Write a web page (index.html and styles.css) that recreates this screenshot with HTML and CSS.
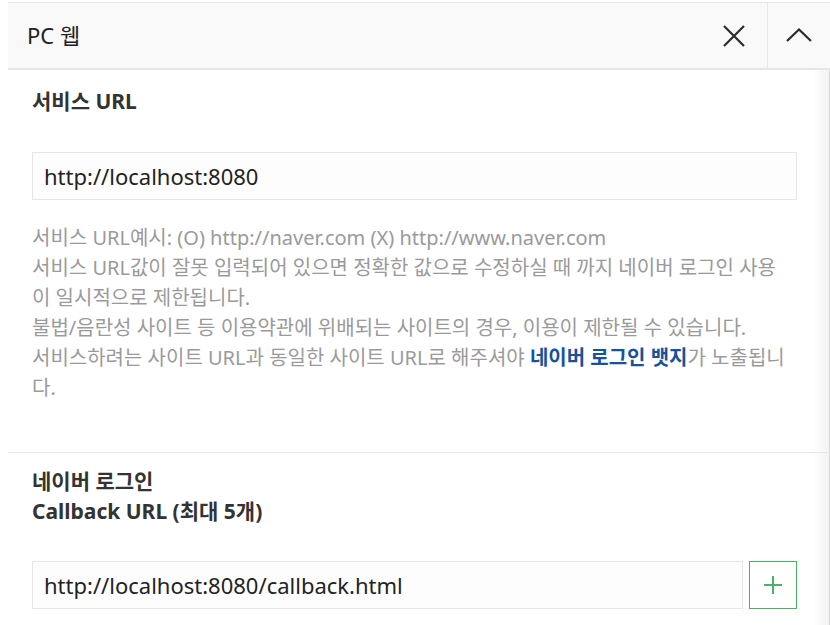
FILE: index.html
```html
<!DOCTYPE html>
<html lang="ko">
<head>
    <meta charset="UTF-8">
    <meta name="viewport" content="width=device-width, initial-scale=1.0">
    <title>PC 웹 설정</title>
    <link rel="stylesheet" href="styles.css">
</head>
<body>
    <div class="layer">
        <!-- Header -->
        <div class="layer-head">
            <h3 class="layer-title">PC 웹</h3>
            <button type="button" class="head-btn btn-close" aria-label="삭제">
                <svg width="22" height="22" viewBox="0 0 22 22">
                    <path d="M1 1 L21 21 M21 1 L1 21" stroke="#2b2b2b" stroke-width="2.2" fill="none"/>
                </svg>
            </button>
            <button type="button" class="head-btn btn-fold" aria-label="접기">
                <svg width="26" height="14" viewBox="0 0 26 14">
                    <path d="M1 13 L13 1.5 L25 13" stroke="#2b2b2b" stroke-width="2.2" fill="none"/>
                </svg>
            </button>
        </div>

        <div class="layer-body">
            <!-- Service URL -->
            <div class="field">
                <h4 class="field-label">서비스 URL</h4>
                <input type="text" class="text-input" value="http://localhost:8080">
                <p class="help">
                    서비스 URL예시: (O) http://naver.com (X) http://www.naver.com<br>
                    서비스 URL값이 잘못 입력되어 있으면 정확한 값으로 수정하실 때 까지 네이버 로그인 사용이 일시적으로 제한됩니다.<br>
                    불법/음란성 사이트 등 이용약관에 위배되는 사이트의 경우, 이용이 제한될 수 있습니다.<br>
                    서비스하려는 사이트 URL과 동일한 사이트 URL로 해주셔야 <strong class="point">네이버 로그인 뱃지</strong>가 노출됩니다.
                </p>
            </div>

            <!-- Callback URL -->
            <div class="field field-callback">
                <h4 class="field-label">네이버 로그인<br>Callback URL (최대 5개)</h4>
                <div class="input-row">
                    <input type="text" class="text-input" value="http://localhost:8080/callback.html">
                    <button type="button" class="btn-add" aria-label="추가">
                        <svg width="18" height="18" viewBox="0 0 18 18">
                            <path d="M9 0 V18 M0 9 H18" stroke="#49b365" stroke-width="2" fill="none"/>
                        </svg>
                    </button>
                </div>
            </div>
        </div>
    </div>
</body>
</html>
```

FILE: styles.css
```css
body {
    margin: 0;
    padding: 0;
    background: #fff;
    font-family: "Noto Sans", "Noto Sans CJK KR", sans-serif;
    color: #333;
}
.layer {
    margin: 2px 0 0 8px;
    width: 822px;
}
.layer-head {
    display: flex;
    align-items: stretch;
    height: 65px;
    background: #f9f9f9;
    border-top: 1px solid #e8e8e8;
    border-bottom: 2px solid #e6e6e6;
}
.layer-title {
    flex: 1;
    margin: 0;
    padding-left: 19px;
    font-size: 22px;
    font-weight: 400;
    line-height: 65px;
    color: #222;
}
.head-btn {
    display: flex;
    align-items: center;
    justify-content: center;
    padding: 0;
    border: none;
    background: none;
    cursor: pointer;
}
.btn-close {
    width: 66px;
}
.btn-fold {
    width: 63px;
    border-left: 1px solid #e6e6e6;
    padding-bottom: 2px;
}
.layer-body {
    background: linear-gradient(to right, #fff 805px, #f3f3f3 821px, #dcdcdc 821px);
}
.field {
    padding: 16px 33px 49px 24px;
}
.field-callback {
    border-top: 1px solid #e6e6e6;
    padding-top: 14px;
    padding-bottom: 16px;
}
.field-label {
    margin: 0 0 36px;
    font-size: 21px;
    font-weight: 700;
    line-height: 30px;
    color: #333;
}
.field-callback .field-label {
    line-height: 29.5px;
    margin-bottom: 35px;
}
.text-input {
    display: block;
    box-sizing: border-box;
    width: 100%;
    height: 48px;
    padding: 0 11px;
    font-family: inherit;
    font-size: 22px;
    color: #222;
    background: #fdfdfd;
    border: 1px solid #e6e6e6;
    border-radius: 0;
    outline: none;
}
.help {
    margin: 23px 9px 0 0;
    font-size: 20px;
    line-height: 30px;
    color: #9a9a9a;
}
.help .point {
    color: #17529a;
    font-weight: 700;
}
.input-row {
    display: flex;
    gap: 6px;
}
.input-row .text-input {
    flex: 1;
}
.btn-add {
    flex: none;
    display: flex;
    align-items: center;
    justify-content: center;
    width: 48px;
    height: 48px;
    padding: 0;
    background: #fff;
    border: 1px solid #49b365;
    cursor: pointer;
}
```
